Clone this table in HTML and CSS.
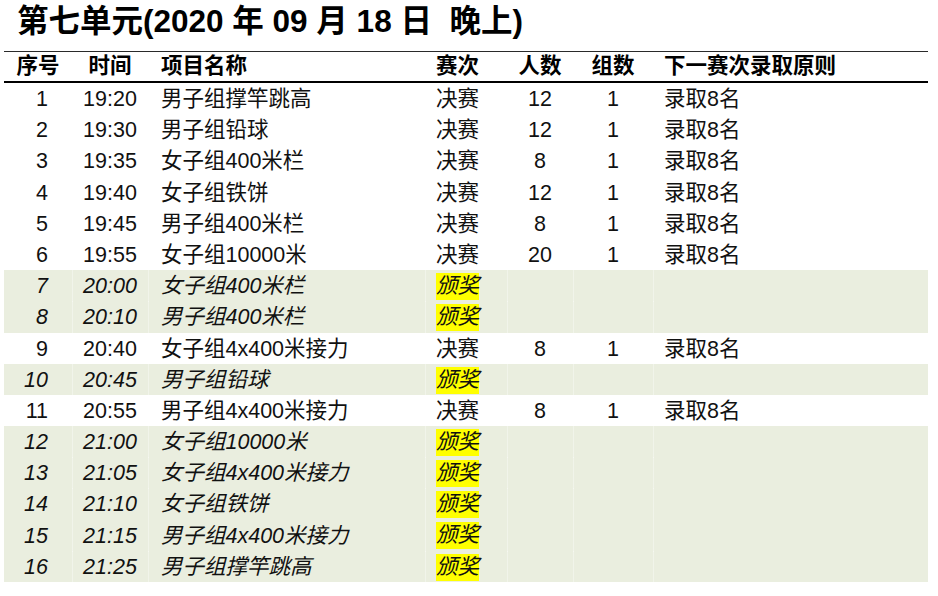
FILE: index.html
```html
<!DOCTYPE html>
<html lang="zh-CN">
<head>
<meta charset="utf-8">
<title>第七单元</title>
<link rel="stylesheet" href="styles.css">
</head>
<body>
<div class="page">
  <h1 class="title">第七单元(2020 年 09 月 18 日&nbsp;&nbsp;晚上)</h1>
  <div class="sheet">
    <div class="row head">
      <div class="c seq">序号</div>
      <div class="c time">时间</div>
      <div class="c name">项目名称</div>
      <div class="c round">赛次</div>
      <div class="c mid">人数</div>
      <div class="c mid">组数</div>
      <div class="c rule">下一赛次录取原则</div>
    </div>
    <div class="row"><div class="c seq">1</div><div class="c time">19:20</div><div class="c name">男子组撑竿跳高</div><div class="c round">决赛</div><div class="c mid">12</div><div class="c mid">1</div><div class="c rule">录取8名</div></div>
    <div class="row"><div class="c seq">2</div><div class="c time">19:30</div><div class="c name">男子组铅球</div><div class="c round">决赛</div><div class="c mid">12</div><div class="c mid">1</div><div class="c rule">录取8名</div></div>
    <div class="row"><div class="c seq">3</div><div class="c time">19:35</div><div class="c name">女子组400米栏</div><div class="c round">决赛</div><div class="c mid">8</div><div class="c mid">1</div><div class="c rule">录取8名</div></div>
    <div class="row"><div class="c seq">4</div><div class="c time">19:40</div><div class="c name">女子组铁饼</div><div class="c round">决赛</div><div class="c mid">12</div><div class="c mid">1</div><div class="c rule">录取8名</div></div>
    <div class="row"><div class="c seq">5</div><div class="c time">19:45</div><div class="c name">男子组400米栏</div><div class="c round">决赛</div><div class="c mid">8</div><div class="c mid">1</div><div class="c rule">录取8名</div></div>
    <div class="row"><div class="c seq">6</div><div class="c time">19:55</div><div class="c name">女子组10000米</div><div class="c round">决赛</div><div class="c mid">20</div><div class="c mid">1</div><div class="c rule">录取8名</div></div>
    <div class="row award"><div class="c seq">7</div><div class="c time">20:00</div><div class="c name">女子组400米栏</div><div class="c round"><span class="mark">颁奖</span></div><div class="c mid"></div><div class="c mid"></div><div class="c rule"></div></div>
    <div class="row award"><div class="c seq">8</div><div class="c time">20:10</div><div class="c name">男子组400米栏</div><div class="c round"><span class="mark">颁奖</span></div><div class="c mid"></div><div class="c mid"></div><div class="c rule"></div></div>
    <div class="row"><div class="c seq">9</div><div class="c time">20:40</div><div class="c name">女子组4x400米接力</div><div class="c round">决赛</div><div class="c mid">8</div><div class="c mid">1</div><div class="c rule">录取8名</div></div>
    <div class="row award"><div class="c seq">10</div><div class="c time">20:45</div><div class="c name">男子组铅球</div><div class="c round"><span class="mark">颁奖</span></div><div class="c mid"></div><div class="c mid"></div><div class="c rule"></div></div>
    <div class="row"><div class="c seq">11</div><div class="c time">20:55</div><div class="c name">男子组4x400米接力</div><div class="c round">决赛</div><div class="c mid">8</div><div class="c mid">1</div><div class="c rule">录取8名</div></div>
    <div class="row award"><div class="c seq">12</div><div class="c time">21:00</div><div class="c name">女子组10000米</div><div class="c round"><span class="mark">颁奖</span></div><div class="c mid"></div><div class="c mid"></div><div class="c rule"></div></div>
    <div class="row award"><div class="c seq">13</div><div class="c time">21:05</div><div class="c name">女子组4x400米接力</div><div class="c round"><span class="mark">颁奖</span></div><div class="c mid"></div><div class="c mid"></div><div class="c rule"></div></div>
    <div class="row award"><div class="c seq">14</div><div class="c time">21:10</div><div class="c name">女子组铁饼</div><div class="c round"><span class="mark">颁奖</span></div><div class="c mid"></div><div class="c mid"></div><div class="c rule"></div></div>
    <div class="row award"><div class="c seq">15</div><div class="c time">21:15</div><div class="c name">男子组4x400米接力</div><div class="c round"><span class="mark">颁奖</span></div><div class="c mid"></div><div class="c mid"></div><div class="c rule"></div></div>
    <div class="row award"><div class="c seq">16</div><div class="c time">21:25</div><div class="c name">男子组撑竿跳高</div><div class="c round"><span class="mark">颁奖</span></div><div class="c mid"></div><div class="c mid"></div><div class="c rule"></div></div>
  </div>
</div>
</body>
</html>
```
FILE: styles.css
```css
html, body {
  margin: 0;
  padding: 0;
  background: #ffffff;
}

body {
  font-family: "Liberation Sans", "Noto Sans CJK SC", sans-serif;
  color: #000;
}

.page {
  padding: 0 10px 0 4px;
}

.title {
  margin: 0;
  padding-left: 13px;
  height: 40px;
  font-size: 31.5px;
  line-height: 43px;
  font-weight: 700;
  white-space: nowrap;
}

.sheet {
  margin-top: 11px;
  width: 924px;
}

.row {
  display: grid;
  grid-template-columns: 68px 76px 277px 82px 66px 80px 275px;
  height: 31.2px;
  font-size: 21.5px;
  line-height: 32px;
  color: #111;
}

.row.head {
  height: 32px;
  box-sizing: border-box;
  border-top: 1.5px solid #2a2a2a;
  border-bottom: 2px solid #000;
  font-weight: 700;
  line-height: 29px;
  color: #000;
}

.c {
  white-space: nowrap;
  overflow: visible;
}

.seq {
  text-align: right;
  padding-right: 24px;
}

.head .seq {
  text-align: center;
  padding-right: 0;
}

.time {
  text-align: center;
}

.name {
  padding-left: 13px;
}

.round {
  padding-left: 11px;
}

.mid {
  text-align: center;
}

.rule {
  padding-left: 11px;
}

.award {
  background: #eaeedf;
  font-style: italic;
}

.award .c + .c {
  box-shadow: inset 1px 0 0 rgba(255, 255, 255, 0.35);
}

.mark {
  display: inline-block;
  background: #ffff00;
  height: 27px;
  line-height: 27px;
  vertical-align: middle;
  margin-top: -2px;
}
```
